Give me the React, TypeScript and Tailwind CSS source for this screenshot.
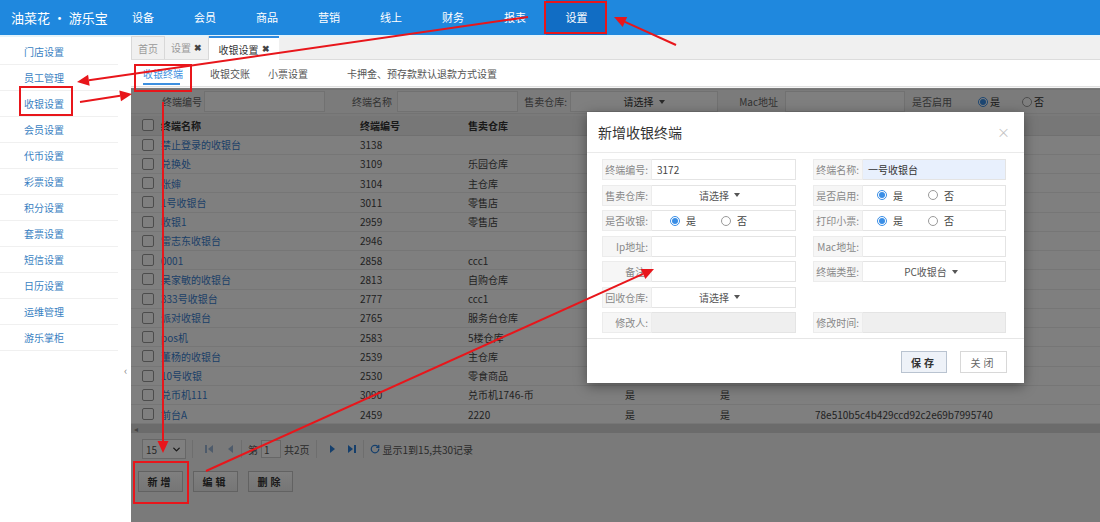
import { ChevronDown, RotateCw } from 'lucide-react';

const navItems = ['设备', '会员', '商品', '营销', '线上', '财务', '报表'];

const sideItems = [
  '门店设置', '员工管理', '收银设置', '会员设置', '代币设置', '彩票设置',
  '积分设置', '套票设置', '短信设置', '日历设置', '运维管理', '游乐掌柜',
];

// the last two rows are the only ones whose right-hand columns show past the dialog
const rows: [string, string, string, string, string, string][] = [
  ['禁止登录的收银台', '3138', '', '', '', ''],
  ['兑换处', '3109', '乐园仓库', '', '', ''],
  ['张婶', '3104', '主仓库', '', '', ''],
  ['1号收银台', '3011', '零售店', '', '', ''],
  ['收银1', '2959', '零售店', '', '', ''],
  ['雷志东收银台', '2946', '', '', '', ''],
  ['0001', '2858', 'ccc1', '', '', ''],
  ['吴家敏的收银台', '2813', '自购仓库', '', '', ''],
  ['333号收银台', '2777', 'ccc1', '', '', ''],
  ['派对收银台', '2765', '服务台仓库', '', '', ''],
  ['pos机', '2583', '5楼仓库', '', '', ''],
  ['董杨的收银台', '2539', '主仓库', '', '', ''],
  ['10号收银', '2530', '零食商品', '', '', ''],
  ['兑币机111', '3090', '兑币机1746-币', '是', '是', ''],
  ['前台A', '2459', '2220', '是', '是', '78e510b5c4b429ccd92c2e69b7995740'],
];

function Radio({ on }: { on?: boolean }) {
  return on ? (
    <span className="flex shrink-0 w-[10px] h-[10px] rounded-full border border-[#3a8ee6] bg-white items-center justify-center">
      <span className="block w-[6px] h-[6px] rounded-full bg-[#3a8ee6]" />
    </span>
  ) : (
    <span className="block shrink-0 w-[10px] h-[10px] rounded-full border border-[#9a9a9a] bg-white" />
  );
}

function Caret() {
  return <span className="block ml-[5px] border-x-[3px] border-t-[4px] border-x-transparent border-t-[#555]" />;
}

function RadioPair({ pl }: { pl: string }) {
  return (
    <div className={`flex items-center h-full ${pl}`}>
      <Radio on />
      <span className="ml-[6px] text-[#444]">是</span>
      <span className="flex ml-[25px]"><Radio /></span>
      <span className="ml-[6px] text-[#444]">否</span>
    </div>
  );
}

// one label + field cell of the dialog form
function Field({ label, w, children, tone = 'bg-white' }: { label: string; w: string; children?: React.ReactNode; tone?: string }) {
  return (
    <div className={`flex h-[21px] ${w}`}>
      <div className="w-[50px] shrink-0 bg-[#f6f6f6] border border-[#ececec] flex items-center justify-end pr-[3px] text-[#888]">
        {label}
      </div>
      <div className={`flex-1 border border-[#e4e4e4] border-l-0 flex items-center ${tone}`}>{children}</div>
    </div>
  );
}

function Arrow({ x1, y1, x2, y2 }: { x1: number; y1: number; x2: number; y2: number }) {
  const dx = x2 - x1;
  const dy = y2 - y1;
  const len = Math.hypot(dx, dy);
  const ux = dx / len;
  const uy = dy / len;
  const bx = x2 - ux * 12;
  const by = y2 - uy * 12;
  const px = -uy * 5.5;
  const py = ux * 5.5;
  return (
    <g>
      <line x1={x1} y1={y1} x2={bx} y2={by} stroke="#e8161b" strokeWidth={2} />
      <polygon points={`${x2},${y2} ${bx + px},${by + py} ${bx - px},${by - py}`} fill="#e8161b" />
    </g>
  );
}

function PagerIcon({ d, color }: { d: string; color: string }) {
  return (
    <svg width="10" height="10" viewBox="0 0 10 10">
      <path d={d} fill={color} />
    </svg>
  );
}

export default function App() {
  return (
    <div className="relative w-[1100px] h-[522px] overflow-hidden bg-white font-['Noto_Sans_CJK_SC','Microsoft_YaHei',sans-serif] text-[10px] text-[#333]">
      {/* Top bar */}
      <header className="h-[35px] bg-[#1f88de] flex items-center text-white">
        <div className="w-[112px] pl-[11px] text-[13px] whitespace-nowrap">油菜花 · 游乐宝</div>
        {navItems.map((n) => (
          <div key={n} className="w-[62px] text-center text-[11px]">{n}</div>
        ))}
        <div className="w-[61px] h-full bg-[#116dc4] flex items-center justify-center text-[11px]">设置</div>
      </header>
      <div className="h-[2px] bg-[#e4f3fa]" />

      <div className="flex h-[485px]">
        {/* Sidebar */}
        <aside className="w-[118px] shrink-0 pt-[2px]">
          {sideItems.map((s) => (
            <div key={s} className="h-[26px] border-b border-[#f0f0f0] flex items-center pl-[24px] text-[#3a7fc2]">
              {s}
            </div>
          ))}
        </aside>
        <div className="w-[13px] shrink-0 pt-[325px] pl-[6px] text-[#888] text-[11px]">‹</div>

        {/* Main */}
        <main className="flex-1 flex flex-col">
          <div className="h-[23px] bg-[#f0f0f0] border-b border-[#dcdcdc] flex items-end">
            <div className="h-[23px] w-[34px] border border-[#d8d8d8] border-b-0 flex items-center justify-center text-[#999]">首页</div>
            <div className="h-[23px] w-[44px] border-r border-[#d8d8d8] flex items-center justify-center text-[#999]">
              设置<span className="ml-[3px] text-[#444] font-bold text-[9px]">✖</span>
            </div>
            <div className="h-[24px] w-[70px] bg-white border-t-2 border-[#2d8ae0] flex items-center justify-center text-[#333] -mb-px">
              收银设置<span className="ml-[3px] text-[#444] font-bold text-[9px]">✖</span>
            </div>
          </div>
          <div className="h-[27px] flex items-stretch pl-[12px] text-[#555] border-b border-[#e0e0e0]">
            <div className="flex flex-col justify-center relative w-[40px] text-[#3d8fe0]">
              收银终端
              <span className="absolute bottom-[1px] left-[0px] w-[37px] h-[2px] bg-[#3d8fe0]" />
            </div>
            <div className="flex items-center ml-[27px]">收银交账</div>
            <div className="flex items-center ml-[18px]">小票设置</div>
            <div className="flex items-center ml-[39px]">卡押金、预存款默认退款方式设置</div>
          </div>

          {/* Content under the modal mask */}
          <div className="flex-1 bg-[#f4f4f4] pt-[2px]">
            <div className="h-[25px] flex items-center bg-[#f7f7f7] border-y border-[#e6e6e6]">
              <div className="w-[31px]" />
              <div className="w-[42px] text-[#666]">终端编号</div>
              <div className="w-[121px] h-[21px] bg-white border border-[#e2e2e2]" />
              <div className="w-[72px] text-right pr-[5px] text-[#666]">终端名称</div>
              <div className="w-[121px] h-[21px] bg-white border border-[#e2e2e2]" />
              <div className="w-[52px] text-right pr-[3px] text-[#666]">售卖仓库:</div>
              <div className="w-[148px] h-[21px] bg-white border border-[#e2e2e2] flex items-center justify-center">
                请选择<Caret />
              </div>
              <div className="w-[67px] text-right pr-[7px] text-[#666]">Mac地址</div>
              <div className="w-[120px] h-[21px] bg-white border border-[#e2e2e2]" />
              <div className="w-[52px] text-right pr-[5px] text-[#666]">是否启用</div>
              <div className="flex items-center pl-[21px]">
                <Radio on />
                <span className="ml-[2px]">是</span>
                <span className="flex ml-[22px]"><Radio /></span>
                <span className="ml-[2px]">否</span>
              </div>
            </div>

            <div className="mt-[2px] bg-white">
              <div className="h-[19.5px] grid grid-cols-[30px_199px_108px_157px_95px_95px_1fr] items-center bg-[#eeeeee] border-b border-[#e0e0e0] font-bold text-[#333]">
                <span className="ml-[11px] w-[12px] h-[12px] border border-[#999] rounded-[2px] bg-white" />
                <span>终端名称</span>
                <span>终端编号</span>
                <span>售卖仓库</span>
                <span />
                <span />
                <span />
              </div>
              {rows.map((r, i) => (
                <div key={i} className="h-[19.25px] grid grid-cols-[30px_199px_108px_157px_95px_95px_1fr] items-center border-b border-[#ececec] text-[#444]">
                  <span className="ml-[11px] w-[12px] h-[12px] border border-[#999] rounded-[2px] bg-white" />
                  <span className="text-[#3a7fd0]">{r[0]}</span>
                  <span>{r[1]}</span>
                  <span>{r[2]}</span>
                  <span>{r[3]}</span>
                  <span>{r[4]}</span>
                  <span>{r[5]}</span>
                </div>
              ))}
            </div>

            <div className="h-[9px] bg-[#d6d6d6] flex items-center pl-[3px] text-[#888] text-[8px]">◂</div>

            <div className="mt-[4px] h-[24px] flex items-center pl-[11px] text-[#555]">
              <div className="w-[44px] h-[20px] bg-white border border-[#cfcfcf] flex items-center justify-between px-[3px]">
                15
                <ChevronDown size={11} strokeWidth={3} color="#333" />
              </div>
              <div className="mx-[6px] w-px h-[18px] bg-[#ddd]" />
              <div className="flex items-center gap-[11px] pl-[5px]">
                <PagerIcon d="M1 1h2v8H1z M9 1v8L4 5z" color="#9cb7d6" />
                <PagerIcon d="M8 1v8L3 5z" color="#9cb7d6" />
              </div>
              <div className="mx-[6px] w-px h-[18px] bg-[#ddd]" />
              <span>第</span>
              <div className="ml-[3px] w-[20px] h-[18px] bg-white border border-[#cfcfcf] pl-[2px] flex items-center">1</div>
              <span className="ml-[3px]">共2页</span>
              <div className="mx-[6px] w-px h-[18px] bg-[#ddd]" />
              <div className="flex items-center gap-[9px] pl-[5px]">
                <PagerIcon d="M2 1v8l5-4z" color="#2b7fd8" />
                <PagerIcon d="M1 1v8l5-4z M7 1h2v8H7z" color="#2b7fd8" />
              </div>
              <div className="mx-[6px] w-px h-[18px] bg-[#ddd]" />
              <RotateCw size={10} strokeWidth={3} color="#2b7fd8" />
              <span className="ml-[3px]">显示1到15,共30记录</span>
            </div>

            <div className="mt-[10px] flex gap-[10px] pl-[7px]">
              {['新增', '编辑', '删除'].map((b) => (
                <div key={b} className="w-[45px] h-[21px] border border-[#c4c4c4] bg-[linear-gradient(#ffffff,#ececec)] flex items-center justify-center tracking-[3px] font-bold text-[#333]">
                  {b}
                </div>
              ))}
            </div>
          </div>
        </main>
      </div>

      {/* Modal mask over the tab content */}
      <div className="absolute left-[131px] top-[88px] w-[969px] h-[434px] z-[10] bg-[rgba(0,0,0,0.5)]" />

      {/* Dialog */}
      <div className="absolute z-[20] left-[587px] top-[112px] w-[437px] h-[271px] bg-white shadow-[0_3px_12px_#00000066]">
        <div className="h-[41px] border-b border-[#eaeaea] flex items-center justify-between pl-[11px] pr-[14px]">
          <span className="text-[14px] text-[#333]">新增收银终端</span>
          <span className="text-[13px] text-[#c4c4c4]">×</span>
        </div>
        <div className="pt-[6px] pl-[15px] pr-[18px] flex flex-col gap-[4.5px]">
          <div className="flex justify-between">
            <Field label="终端编号:" w="w-[194px]"><span className="pl-[5px] text-[#444]">3172</span></Field>
            <Field label="终端名称:" w="w-[193px]" tone="bg-[#e8f0fd]"><span className="pl-[5px] text-[#333]">一号收银台</span></Field>
          </div>
          <div className="flex justify-between">
            <Field label="售卖仓库:" w="w-[194px]"><div className="w-full flex items-center justify-center pr-[8px] text-[#555]">请选择<Caret /></div></Field>
            <Field label="是否启用:" w="w-[193px]"><RadioPair pl="pl-[14px]" /></Field>
          </div>
          <div className="flex justify-between">
            <Field label="是否收银:" w="w-[194px]"><RadioPair pl="pl-[18px]" /></Field>
            <Field label="打印小票:" w="w-[193px]"><RadioPair pl="pl-[14px]" /></Field>
          </div>
          <div className="flex justify-between">
            <Field label="Ip地址:" w="w-[194px]" />
            <Field label="Mac地址:" w="w-[193px]" />
          </div>
          <div className="flex justify-between">
            <Field label="备注:" w="w-[194px]" />
            <Field label="终端类型:" w="w-[193px]"><div className="w-full flex items-center justify-center pr-[6px] text-[#555]">PC收银台<Caret /></div></Field>
          </div>
          <div className="flex justify-between">
            <Field label="回收仓库:" w="w-[194px]"><div className="w-full flex items-center justify-center pr-[8px] text-[#555]">请选择<Caret /></div></Field>
            <div className="w-[193px]" />
          </div>
          <div className="flex justify-between">
            <Field label="修改人:" w="w-[194px]" tone="bg-[#efefef]" />
            <Field label="修改时间:" w="w-[193px]" tone="bg-[#efefef]" />
          </div>
        </div>
        <div className="mt-[5px] border-t border-[#e6e6e6] pt-[12px] pr-[17px] flex justify-end gap-[13px]">
          <div className="w-[46px] h-[22px] bg-[#eef2f8] border border-[#b9c3d0] flex items-center justify-center tracking-[3px] font-bold text-[#333]">保存</div>
          <div className="w-[47px] h-[22px] bg-white border border-[#d8d8d8] flex items-center justify-center tracking-[3px] text-[#666]">关闭</div>
        </div>
      </div>

      {/* Red annotation marks */}
      <svg className="absolute left-[0px] top-[0px] z-[30] pointer-events-none" width="1100" height="522" viewBox="0 0 1100 522">
        <rect x="545" y="2" width="61" height="31" fill="none" stroke="#e8161b" strokeWidth={2} />
        <rect x="20" y="87" width="52" height="28" fill="none" stroke="#e8161b" strokeWidth={2} />
        <rect x="135" y="65" width="56" height="26" fill="none" stroke="#e8161b" strokeWidth={2} />
        <rect x="134" y="462" width="54" height="41" fill="none" stroke="#e8161b" strokeWidth={2} />
        <Arrow x1={676} y1={45} x2={614} y2={17} />
        <Arrow x1={528} y1={17} x2={77} y2={82} />
        <Arrow x1={80} y1={102} x2={132} y2={94} />
        <Arrow x1={163} y1={102} x2={163} y2={453} />
        <Arrow x1={206} y1={471} x2={654} y2={269} />
      </svg>
    </div>
  );
}
